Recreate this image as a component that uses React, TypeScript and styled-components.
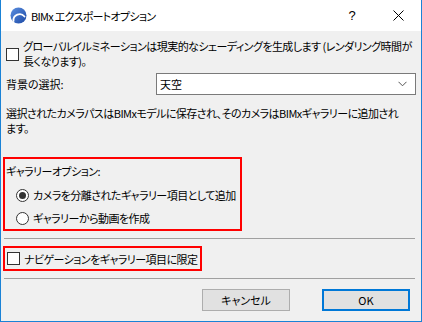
import React from "react";
import styled, { createGlobalStyle } from "styled-components";

const Global = createGlobalStyle`
  html, body { margin: 0; padding: 0; background: #ffffff; }
  * { box-sizing: border-box; }
`;

const FONT = `"Noto Sans CJK JP", "Noto Sans", sans-serif`;

const Window = styled.div`
  width: 422px;
  height: 322px;
  border-left: 1px solid #1a82d6;
  border-right: 1px solid #1a82d6;
  border-bottom: 1px solid #1a82d6;
  display: flex;
  flex-direction: column;
  font-family: ${FONT};
  font-size: 11px;
  letter-spacing: -0.55px;
  font-feature-settings: "palt";
  color: #000;
  overflow: hidden;
`;

const TitleBar = styled.div`
  height: 31px;
  flex: none;
  background: #ffffff;
  display: flex;
  align-items: center;
  padding-left: 9px;
`;

const TitleText = styled.span`
  margin-left: 4px;
  font-size: 11px;
  letter-spacing: -0.7px;
  line-height: 16px;
  color: #000;
`;

const TitleButtons = styled.div`
  margin-left: auto;
  display: flex;
  align-items: center;
  height: 100%;
`;

const TitleButton = styled.div<{ $w: number }>`
  width: ${(p) => p.$w}px;
  height: 100%;
  display: flex;
  align-items: center;
  justify-content: center;
  font-family: "Liberation Sans", sans-serif;
  font-size: 13px;
  letter-spacing: 0;
  color: #000;
`;

const Content = styled.div`
  flex: 1;
  background: #f0f0f0;
  display: flex;
  flex-direction: column;
  padding: 0 5px 0 2px;
`;

const CheckRow = styled.label<{ $top: number }>`
  display: flex;
  align-items: center;
  gap: 4px;
  margin-top: ${(p) => p.$top}px;
  padding-left: 3px;
  line-height: 15px;
`;

const Box = styled.span`
  flex: none;
  width: 13px;
  height: 13px;
  background: #fff;
  border: 1px solid #333;
`;

const Text = styled.span`
  white-space: nowrap;
`;

const FieldRow = styled.div`
  display: flex;
  align-items: center;
  margin-top: 4px;
  padding-left: 3px;
  height: 22px;
`;

const FieldLabel = styled.span`
  width: 150px;
  flex: none;
  letter-spacing: 0;
`;

const Select = styled.div`
  flex: 1;
  height: 22px;
  background: #fff;
  border: 1px solid #7a7a7a;
  display: flex;
  align-items: center;
  padding: 0 8px 0 3px;
`;

const SelectValue = styled.span`
  flex: 1;
  letter-spacing: 0;
`;

const Para = styled.p`
  margin: 11px 0 0 0;
  padding-left: 3px;
  line-height: 15px;
  white-space: nowrap;
`;

const Highlight = styled.div<{ $top: number; $w: number }>`
  margin-top: ${(p) => p.$top}px;
  width: ${(p) => p.$w}px;
  border: 2px solid #ff0000;
  display: flex;
  flex-direction: column;
`;

const GroupLabel = styled.div`
  height: 24px;
  display: flex;
  align-items: center;
  padding-left: 1px;
`;

const RadioRow = styled.div<{ $h: number }>`
  height: ${(p) => p.$h}px;
  display: flex;
  align-items: center;
  gap: 4px;
  padding-left: 11px;
`;

const Radio = styled.span<{ $on?: boolean }>`
  flex: none;
  width: 13px;
  height: 13px;
  border-radius: 50%;
  border: 1px solid #333;
  background: #fff;
  display: flex;
  align-items: center;
  justify-content: center;
  &::after {
    content: "";
    display: ${(p) => (p.$on ? "block" : "none")};
    width: 7px;
    height: 7px;
    border-radius: 50%;
    background: #333;
  }
`;

const NavRow = styled.label`
  height: 21px;
  display: flex;
  align-items: center;
  gap: 4px;
  padding-left: 2px;
`;

const Separator = styled.div<{ $top: number }>`
  margin-top: ${(p) => p.$top}px;
  margin-left: 1px;
  margin-right: 1px;
  height: 1px;
  background: #a0a0a0;
`;

const ButtonRow = styled.div`
  margin-top: 10px;
  display: flex;
  justify-content: flex-end;
  gap: 32px;
  padding-right: 6px;
`;

const Button = styled.div<{ $default?: boolean }>`
  width: 88px;
  height: 22px;
  background: #e1e1e1;
  border: ${(p) => (p.$default ? "2px solid #0078d7" : "1px solid #adadad")};
  display: flex;
  align-items: center;
  justify-content: center;
  letter-spacing: 0;
`;

const Logo = () => (
  <svg width="17" height="17" viewBox="0 0 17 17">
    <defs>
      <linearGradient id="lg" x1="0" y1="0" x2="1" y2="1">
        <stop offset="0" stopColor="#5b8fe0" />
        <stop offset="1" stopColor="#1d4aa6" />
      </linearGradient>
    </defs>
    <circle cx="8.5" cy="8.5" r="8" fill="url(#lg)" />
    <path d="M3.5 14 A6.2 6.2 0 0 1 14.5 9.5" fill="none" stroke="#fff" strokeWidth="1.8" strokeLinecap="round" />
  </svg>
);

const Chevron = () => (
  <svg width="9" height="6" viewBox="0 0 9 6">
    <path d="M0.5 0.8 L4.5 4.8 L8.5 0.8" fill="none" stroke="#555" strokeWidth="1" />
  </svg>
);

const CloseIcon = () => (
  <svg width="11" height="11" viewBox="0 0 11 11">
    <path d="M0.5 0.5 L10.5 10.5 M10.5 0.5 L0.5 10.5" stroke="#000" strokeWidth="1" />
  </svg>
);

export default function App() {
  return (
    <>
      <Global />
      <Window>
        <TitleBar>
          <Logo />
          <TitleText>BIMx エクスポートオプション</TitleText>
          <TitleButtons>
            <TitleButton $w={46}>?</TitleButton>
            <TitleButton $w={46}>
              <CloseIcon />
            </TitleButton>
          </TitleButtons>
        </TitleBar>
        <Content>
          <CheckRow $top={8}>
            <Box />
            <Text>
              グローバルイルミネーションは現実的なシェーディングを生成します (レンダリング時間が
              <br />
              長くなります)。
            </Text>
          </CheckRow>
          <FieldRow>
            <FieldLabel>背景の選択:</FieldLabel>
            <Select>
              <SelectValue>天空</SelectValue>
              <Chevron />
            </Select>
          </FieldRow>
          <Para>
            選択されたカメラパスはBIMxモデルに保存され、そのカメラはBIMxギャラリーに追加され
            <br />
            ます。
          </Para>
          <Highlight $top={21} $w={239}>
            <GroupLabel>ギャラリーオプション:</GroupLabel>
            <RadioRow $h={24}>
              <Radio $on />
              <Text>カメラを分離されたギャラリー項目として追加</Text>
            </RadioRow>
            <RadioRow $h={22}>
              <Radio />
              <Text>ギャラリーから動画を作成</Text>
            </RadioRow>
          </Highlight>
          <Separator $top={7} />
          <Highlight $top={7} $w={199}>
            <NavRow>
              <Box />
              <Text>ナビゲーションをギャラリー項目に限定</Text>
            </NavRow>
          </Highlight>
          <Separator $top={7} />
          <ButtonRow>
            <Button>キャンセル</Button>
            <Button $default>OK</Button>
          </ButtonRow>
        </Content>
      </Window>
    </>
  );
}
